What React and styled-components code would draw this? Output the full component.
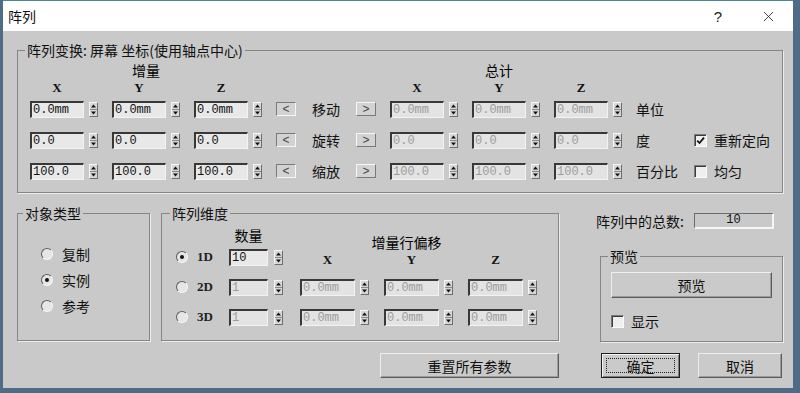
import React from 'react';
import styled, { createGlobalStyle } from 'styled-components';
import { X } from 'lucide-react';

const GlobalStyle = createGlobalStyle`
  html, body {
    margin: 0;
    padding: 0;
    background: #506b86;
  }
  body {
    width: 800px;
    height: 393px;
    overflow: hidden;
    font-family: "Noto Sans CJK SC", "Liberation Sans", sans-serif;
    color: #111;
  }
`;

const COLS = '68px 68px 68px 20px 32px 20px 68px 68px 68px 44px auto';
const DIM_COLS = '53px 71px 84px 84px 72px';

const Window = styled.div`
  margin-left: 3px;
  width: 790px;
  height: 388px;
  box-sizing: border-box;
  background: #c9c9c9;
  border-top: 1px solid #4b8792;
  display: flex;
  flex-direction: column;
`;

const TitleBar = styled.div`
  height: 30px;
  flex-shrink: 0;
  background: #fff;
  display: flex;
  align-items: center;
  padding-left: 5px;
  font-size: 14px;
`;

const TitleText = styled.span`
  line-height: 16px;
`;

const TitleButtons = styled.div`
  margin-left: auto;
  display: flex;
  align-items: center;
  height: 100%;
`;

const TitleBtn = styled.div`
  width: ${p => p.$w}px;
  height: 100%;
  margin-right: ${p => p.$mr}px;
  display: flex;
  align-items: center;
  justify-content: center;
  font-family: "Liberation Sans", sans-serif;
  font-size: 15px;
  color: #222;
`;

const Body = styled.div`
  padding: 11px 10px 0 14px;
  display: flex;
  flex-direction: column;
`;

const Group = styled.fieldset`
  margin: 0;
  padding: 0;
  min-width: 0;
  box-sizing: border-box;
  width: ${p => p.$w}px;
  height: ${p => (p.$h ? `${p.$h}px` : 'auto')};
  border: 1px solid #858585;
  box-shadow: 1px 1px 0 #ededed;
`;

const Legend = styled.legend`
  padding: 0 2px;
  margin-left: ${p => p.$ml}px;
  font-size: 14px;
  line-height: 16px;
  color: #111;
`;

const Inner = styled.div`
  padding: ${p => p.$pad};
`;

/* ---------- transform block ---------- */

const HeadGrid = styled.div`
  display: grid;
  grid-template-columns: ${COLS};
  grid-template-rows: 16px 16px;
  column-gap: 14px;
  margin-bottom: 5px;
`;

const Heading = styled.div`
  grid-column: ${p => p.$col};
  grid-row: 1;
  width: ${p => (p.$w ? `${p.$w}px` : 'auto')};
  text-align: center;
  font-size: 14px;
  line-height: 16px;
  color: #000;
`;

const Axis = styled.div`
  grid-column: ${p => p.$col};
  grid-row: 2;
  width: 54px;
  padding-top: 2px;
  text-align: center;
  font-family: "Liberation Serif", serif;
  font-weight: 700;
  font-size: 13px;
  line-height: 16px;
  color: #111;
`;

const RowGrid = styled.div`
  display: grid;
  grid-template-columns: ${COLS};
  grid-auto-rows: 20px;
  column-gap: 14px;
  row-gap: 11px;
  align-items: center;
`;

const SpinWrap = styled.div`
  display: flex;
  align-items: center;
`;

const Field = styled.div`
  width: ${p => p.$w}px;
  height: 17px;
  box-sizing: border-box;
  background: ${p => (p.$disabled ? '#e3e3e3' : '#e8e8e8')};
  border-top: 2px solid #383838;
  border-left: 2px solid #383838;
  border-right: 1px solid #f3f3f3;
  border-bottom: 1px solid #f3f3f3;
  padding-left: 1px;
  font-family: "Liberation Mono", monospace;
  font-size: 12px;
  line-height: 14px;
  color: ${p => (p.$disabled ? '#9c9c9c' : '#111')};
  white-space: nowrap;
  overflow: hidden;
`;

const Spinner = styled.div`
  width: 9px;
  height: 15px;
  margin-left: ${p => p.$gap}px;
  box-sizing: border-box;
  background: #d6d6d6;
  border: 1px solid;
  border-color: #f7f7f7 #6e6e6e #6e6e6e #f7f7f7;
  display: flex;
`;

const ArrowBtn = styled.div`
  width: 20px;
  height: 14px;
  box-sizing: border-box;
  background: #d2d2d2;
  border: 1px solid;
  border-color: ${p => (p.$sunken ? '#7a7a7a #f6f6f6 #f6f6f6 #7a7a7a' : '#f6f6f6 #7a7a7a #7a7a7a #f6f6f6')};
  display: flex;
  align-items: center;
  justify-content: center;
  font-family: "Liberation Sans", sans-serif;
  font-size: 12px;
  line-height: 12px;
  color: #444;
`;

const OpLabel = styled.div`
  text-align: center;
  font-size: 14px;
  line-height: 16px;
  white-space: nowrap;
`;

const Unit = styled.div`
  font-size: 14px;
  line-height: 16px;
  white-space: nowrap;
`;

const CheckItem = styled.label`
  display: flex;
  align-items: center;
  gap: 7px;
  font-size: 14px;
  line-height: 16px;
  white-space: nowrap;
`;

const Box = styled.span`
  width: 13px;
  height: 13px;
  box-sizing: border-box;
  flex-shrink: 0;
  background: #efefef;
  border: 1px solid;
  border-color: #7a7a7a #fafafa #fafafa #7a7a7a;
  box-shadow: inset 1px 1px 0 #3c3c3c;
  display: flex;
  align-items: center;
  justify-content: center;
`;

/* ---------- lower area ---------- */

const Lower = styled.div`
  display: flex;
  gap: 36px;
  margin-top: 12px;
`;

const LeftCol = styled.div`
  width: 542px;
  display: flex;
  flex-direction: column;
  align-items: flex-end;
`;

const GroupRow = styled.div`
  display: flex;
  gap: 11px;
`;

const RadioList = styled.div`
  display: flex;
  flex-direction: column;
  gap: 10px;
`;

const RadioItem = styled.div`
  height: 16px;
  display: flex;
  align-items: center;
  gap: ${p => p.$gap}px;
  font-size: 14px;
  line-height: 16px;
`;

const Radio = styled.span`
  width: 12px;
  height: 12px;
  flex-shrink: 0;
  box-sizing: border-box;
  border-radius: 50%;
  border: 1px solid;
  border-color: #5e5e5e #f6f6f6 #f6f6f6 #5e5e5e;
  background: #e6e6e6;
  display: flex;
  align-items: center;
  justify-content: center;
  &::after {
    content: '';
    width: 4px;
    height: 4px;
    border-radius: 50%;
    background: ${p => (p.$on ? '#111' : 'transparent')};
  }
`;

const DimLabel = styled.span`
  font-family: "Liberation Serif", serif;
  font-weight: 700;
  font-size: 13px;
  color: #222;
`;

const DimHead = styled.div`
  display: grid;
  grid-template-columns: ${DIM_COLS};
  height: 18px;
`;

const DimHeading = styled.div`
  grid-column: ${p => p.$col};
  align-self: ${p => p.$align};
  margin-left: ${p => p.$ml || 0}px;
  margin-bottom: ${p => p.$mb || 0}px;
  width: ${p => (p.$w ? `${p.$w}px` : 'auto')};
  text-align: center;
  font-size: 14px;
  line-height: 16px;
  color: #000;
  white-space: nowrap;
`;

const DimGrid = styled.div`
  display: grid;
  grid-template-columns: ${DIM_COLS};
  grid-auto-rows: 20px;
  row-gap: 10px;
  margin-top: 2px;
  align-items: center;
`;

const DimAxis = styled.div`
  width: 55px;
  text-align: center;
  font-family: "Liberation Serif", serif;
  font-weight: 700;
  font-size: 13px;
  line-height: 16px;
  margin-top: 6px;
`;

const Button = styled.button`
  width: ${p => p.$w}px;
  height: ${p => p.$h || 25}px;
  margin: 0;
  padding: 0;
  box-sizing: border-box;
  background: #cacaca;
  border: 1px solid;
  border-color: ${p => (p.$default ? '#1e1e1e' : '#eeeeee #5c5c5c #5c5c5c #eeeeee')};
  box-shadow: ${p => (p.$default
    ? 'inset 1px 1px 0 #f2f2f2, inset -1px -1px 0 #7c7c7c'
    : 'inset -1px -1px 0 #9c9c9c')};
  display: flex;
  align-items: center;
  justify-content: center;
  font-family: "Noto Sans CJK SC", "Liberation Sans", sans-serif;
  font-size: 14px;
  line-height: 16px;
  color: #111;
`;

const Focus = styled.span`
  width: calc(100% - 8px);
  height: calc(100% - 8px);
  box-sizing: border-box;
  border: 1px dotted #222;
  display: flex;
  align-items: center;
  justify-content: center;
`;

const ResetRow = styled.div`
  margin-top: 12px;
`;

const RightCol = styled.div`
  width: 188px;
  display: flex;
  flex-direction: column;
`;

const TotalRow = styled.div`
  margin-top: 8px;
  height: 16px;
  display: flex;
  align-items: center;
  padding-left: 1px;
  font-size: 14px;
  line-height: 16px;
`;

const CountBox = styled.div`
  margin-left: auto;
  margin-right: 9px;
  width: 80px;
  height: 16px;
  box-sizing: border-box;
  border-top: 1px solid #6c6c6c;
  border-left: 1px solid #6c6c6c;
  border-right: 2px solid #f6f6f6;
  border-bottom: 2px solid #f6f6f6;
  text-align: center;
  font-family: "Liberation Mono", monospace;
  font-size: 12px;
  line-height: 13px;
`;

const PreviewWrap = styled.div`
  margin: 19px 0 0 5px;
`;

const PreviewCheck = styled.div`
  margin-top: 15px;
`;

const ActionRow = styled.div`
  display: flex;
  gap: 18px;
  margin: 11px 0 0 6px;
`;

const SpinIcon = () => (
  <svg width="7" height="13" viewBox="0 0 7 13">
    <polygon points="3.5,1.5 6,4.5 1,4.5" fill="#111" />
    <line x1="0" y1="6.5" x2="7" y2="6.5" stroke="#8a8a8a" strokeWidth="1" />
    <polygon points="1,8.5 6,8.5 3.5,11.5" fill="#111" />
  </svg>
);

const SpinField = ({ value, w = 54, gap = 5, disabled }) => (
  <SpinWrap>
    <Field $w={w} $disabled={disabled}>{value}</Field>
    <Spinner $gap={gap}><SpinIcon /></Spinner>
  </SpinWrap>
);

const Check = ({ on, children }) => (
  <CheckItem>
    <Box>
      {on && (
        <svg width="9" height="9" viewBox="0 0 9 9">
          <path d="M1.2 4.6 L3.5 7 L8 1.6" fill="none" stroke="#111" strokeWidth="1.8" />
        </svg>
      )}
    </Box>
    {children}
  </CheckItem>
);

const transformRows = [
  { op: '移动', inc: ['0.0mm', '0.0mm', '0.0mm'], unit: '单位' },
  { op: '旋转', inc: ['0.0', '0.0', '0.0'], unit: '度', check: { text: '重新定向', on: true } },
  { op: '缩放', inc: ['100.0', '100.0', '100.0'], unit: '百分比', check: { text: '均匀', on: false } },
];

const dims = [
  { label: '1D', on: true, count: '10' },
  { label: '2D', on: false, count: '1' },
  { label: '3D', on: false, count: '1' },
];

export default function App() {
  return (
    <>
      <GlobalStyle />
      <Window>
        <TitleBar>
          <TitleText>阵列</TitleText>
          <TitleButtons>
            <TitleBtn $w={40} $mr={8}>?</TitleBtn>
            <TitleBtn $w={44} $mr={3}><X size={17} strokeWidth={1.2} color="#222" /></TitleBtn>
          </TitleButtons>
        </TitleBar>

        <Body>
          <Group $w={766}>
            <Legend $ml={7}>阵列变换: 屏幕 坐标(使用轴点中心)</Legend>
            <Inner $pad="4px 0 11px 12px">
              <HeadGrid>
                <Heading $col={2}>增量</Heading>
                <Heading $col={8} $w={54}>总计</Heading>
                {[1, 2, 3].map((c, i) => <Axis key={c} $col={c}>{'XYZ'[i]}</Axis>)}
                {[7, 8, 9].map((c, i) => <Axis key={c} $col={c}>{'XYZ'[i]}</Axis>)}
              </HeadGrid>
              <RowGrid>
                {transformRows.map(r => (
                  <React.Fragment key={r.op}>
                    {r.inc.map((v, i) => <SpinField key={`i${i}`} value={v} />)}
                    <ArrowBtn $sunken>&lt;</ArrowBtn>
                    <OpLabel>{r.op}</OpLabel>
                    <ArrowBtn>&gt;</ArrowBtn>
                    {r.inc.map((v, i) => <SpinField key={`t${i}`} value={v} disabled />)}
                    <Unit>{r.unit}</Unit>
                    {r.check ? <Check on={r.check.on}>{r.check.text}</Check> : <span />}
                  </React.Fragment>
                ))}
              </RowGrid>
            </Inner>
          </Group>

          <Lower>
            <LeftCol>
              <GroupRow>
                <Group $w={133} $h={136}>
                  <Legend $ml={5}>对象类型</Legend>
                  <Inner $pad="25px 0 0 23px">
                    <RadioList>
                      <RadioItem $gap={9}><Radio />复制</RadioItem>
                      <RadioItem $gap={9}><Radio $on />实例</RadioItem>
                      <RadioItem $gap={9}><Radio />参考</RadioItem>
                    </RadioList>
                  </Inner>
                </Group>

                <Group $w={398} $h={136}>
                  <Legend $ml={8}>阵列维度</Legend>
                  <Inner $pad="6px 0 0 14px">
                    <DimHead>
                      <DimHeading $col={2} $w={39} $align="start">数量</DimHeading>
                      <DimHeading $col="3 / span 2" $align="end" $ml={45} $mb={-5}>增量行偏移</DimHeading>
                    </DimHead>
                    <DimGrid>
                      {dims.map((d, row) => (
                        <React.Fragment key={d.label}>
                          <RadioItem $gap={9}><Radio $on={d.on} /><DimLabel>{d.label}</DimLabel></RadioItem>
                          <SpinField value={d.count} w={39} gap={6} disabled={!d.on} />
                          {row === 0
                            ? ['X', 'Y', 'Z'].map(a => <DimAxis key={a}>{a}</DimAxis>)
                            : [0, 1, 2].map(i => <SpinField key={i} value="0.0mm" w={55} disabled />)}
                        </React.Fragment>
                      ))}
                    </DimGrid>
                  </Inner>
                </Group>
              </GroupRow>
              <ResetRow>
                <Button $w={179}>重置所有参数</Button>
              </ResetRow>
            </LeftCol>

            <RightCol>
              <TotalRow>
                阵列中的总数:
                <CountBox>10</CountBox>
              </TotalRow>
              <PreviewWrap>
                <Group $w={183} $h={94}>
                  <Legend $ml={7}>预览</Legend>
                  <Inner $pad="8px 0 0 10px">
                    <Button $w={161} $h={26}>预览</Button>
                    <PreviewCheck>
                      <Check>显示</Check>
                    </PreviewCheck>
                  </Inner>
                </Group>
              </PreviewWrap>
              <ActionRow>
                <Button $w={79} $default><Focus>确定</Focus></Button>
                <Button $w={84}>取消</Button>
              </ActionRow>
            </RightCol>
          </Lower>
        </Body>
      </Window>
    </>
  );
}
